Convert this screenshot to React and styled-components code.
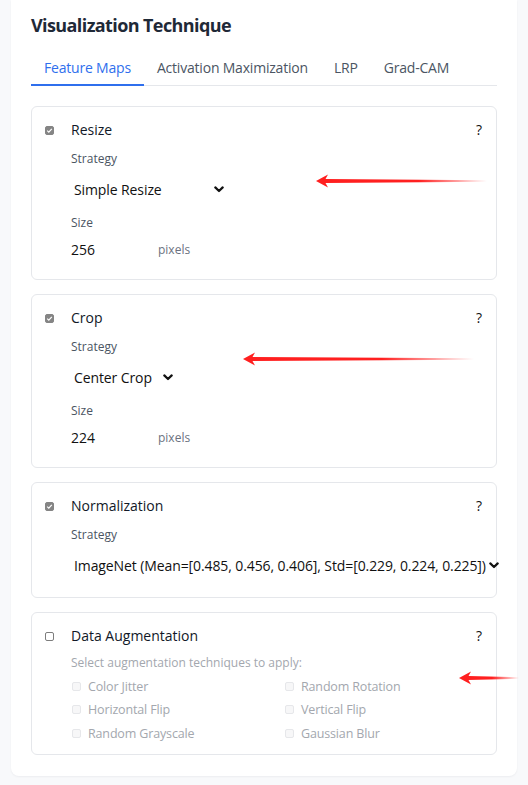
import React from "react";
import styled, { createGlobalStyle } from "styled-components";

const GlobalStyle = createGlobalStyle`
  html, body { margin: 0; padding: 0; background: #f8f9fb; }
  body { font-family: "Open Sans", "Noto Sans", sans-serif; color: #111827; }
  * { box-sizing: border-box; }
`;

const Page = styled.div`
  position: relative;
  padding: 0 11px 8px 11px;
  width: 528px;
`;

const Panel = styled.section`
  background: #ffffff;
  border-radius: 0 0 8px 8px;
  box-shadow: 0 1px 2px rgba(15, 23, 42, 0.05);
  padding: 12px 20px 21px 20px;
`;

const Title = styled.h2`
  margin: 0 0 12px 0;
  font-size: 18px;
  line-height: 26px;
  font-weight: 700;
  letter-spacing: -0.6px;
  color: #1f2937;
`;

const Tabs = styled.div`
  display: flex;
  border-bottom: 1px solid #e5e7eb;
  margin-bottom: 20px;
`;

const Tab = styled.div`
  padding: 8px 13px 6px 13px;
  font-size: 14px;
  line-height: 20px;
  letter-spacing: -0.2px;
  color: ${(p) => (p.$active ? "#2f6fed" : "#4b5563")};
  border-bottom: 2px solid ${(p) => (p.$active ? "#2f6fed" : "transparent")};
  margin-bottom: -1px;
`;

const Stack = styled.div`
  display: flex;
  flex-direction: column;
  gap: 14px;
`;

const Card = styled.div`
  border: 1px solid #e5e7eb;
  border-radius: 6px;
  padding: 12px 14px ${(p) => p.$pb ?? 17}px 13px;
  display: grid;
  grid-template-columns: 26px 1fr;
  background: #fff;
`;

const CheckCol = styled.div`
  height: 22px;
  display: flex;
  align-items: center;
`;

const Box = styled.span`
  display: inline-flex;
  align-items: center;
  justify-content: center;
  width: 9px;
  height: 9px;
  border-radius: 2px;
  background: ${(p) => (p.$checked ? "#858585" : p.$faint ? "#f7f7f8" : "#ffffff")};
  border: 1px solid ${(p) => (p.$checked ? "#858585" : p.$faint ? "#e6e7ea" : "#7d7d7d")};
  flex-shrink: 0;
`;

const Body = styled.div`
  display: flex;
  flex-direction: column;
  min-width: 0;
`;

const HeadRow = styled.div`
  display: flex;
  justify-content: space-between;
  align-items: center;
  height: 22px;
  margin-top: -1px;
  margin-bottom: 1px;
  font-size: 14px;
  color: #111827;
`;

const Help = styled.span`
  font-size: 14px;
  color: #111;
`;

const Label = styled.div`
  margin-top: ${(p) => p.$mt ?? 8}px;
  font-size: 12px;
  line-height: 20px;
  color: #4b5563;
`;

const Select = styled.div`
  margin-top: 5px;
  height: 30px;
  width: ${(p) => (p.$w ? `${p.$w}px` : "max-content")};
  display: flex;
  align-items: center;
  justify-content: space-between;
  padding: 0 4px 0 3px;
  font-size: 14px;
  letter-spacing: -0.1px;
  color: #111;
  white-space: nowrap;
  gap: 3px;
`;

const ValueRow = styled.div`
  margin-top: 3px;
  height: 26px;
  display: flex;
  align-items: center;
`;

const Value = styled.span`
  width: 87px;
  font-size: 14px;
  color: #111;
`;

const Unit = styled.span`
  font-size: 12px;
  color: #6b7280;
`;

const Desc = styled.div`
  margin-top: 7px;
  font-size: 12px;
  line-height: 18px;
  color: #a3a7ae;
`;

const OptGrid = styled.div`
  margin-top: 4px;
  display: grid;
  grid-template-columns: 213px 1fr;
  row-gap: 3.5px;
`;

const Opt = styled.div`
  display: flex;
  align-items: center;
  gap: 7px;
  height: 20px;
  font-size: 12.5px;
  letter-spacing: -0.15px;
  color: #a3a7ae;
  padding-left: 1px;
`;

const Arrow = styled.svg`
  position: absolute;
  overflow: visible;
  pointer-events: none;
`;

function Chevron() {
  return (
    <svg width="10" height="7" viewBox="0 0 10 7">
      <path d="M1.3 1.4 L5 5 L8.7 1.4" fill="none" stroke="#111" strokeWidth="2.2" strokeLinecap="round" strokeLinejoin="round" />
    </svg>
  );
}

function Check({ checked, faint }) {
  return (
    <Box $checked={checked} $faint={faint}>
      {checked && (
        <svg width="7" height="7" viewBox="0 0 7 7">
          <path d="M1.2 3.6 L2.8 5.1 L5.8 1.8" fill="none" stroke="#fff" strokeWidth="1.2" />
        </svg>
      )}
    </Box>
  );
}

function RedArrow({ x, y, len, solid, id }) {
  return (
    <Arrow style={{ left: x, top: y - 7 }} width={len} height="14" viewBox={`0 0 ${len} 14`}>
      <defs>
        <linearGradient id={id} x1="0" x2={len} y1="0" y2="0" gradientUnits="userSpaceOnUse">
          <stop offset="0" stopColor="#ff1f1f" />
          <stop offset={solid} stopColor="#ff2020" />
          <stop offset="1" stopColor="#ff2020" stopOpacity="0" />
        </linearGradient>
      </defs>
      <path
        d={`M0 7 L12 0.6 L9.5 5 L${len} 6.2 L${len} 7.8 L9.5 9 L12 13.4 Z`}
        fill={`url(#${id})`}
      />
    </Arrow>
  );
}

const tabs = ["Feature Maps", "Activation Maximization", "LRP", "Grad-CAM"];

function Strategy({ value, w }) {
  return (
    <>
      <Label>Strategy</Label>
      <Select $w={w}>
        <span>{value}</span>
        <Chevron />
      </Select>
    </>
  );
}

function SizeField({ value }) {
  return (
    <>
      <Label $mt={9}>Size</Label>
      <ValueRow>
        <Value>{value}</Value>
        <Unit>pixels</Unit>
      </ValueRow>
    </>
  );
}

export default function App() {
  return (
    <>
      <GlobalStyle />
      <Page>
        <Panel>
          <Title>Visualization Technique</Title>
          <Tabs>
            {tabs.map((t, i) => (
              <Tab key={t} $active={i === 0}>{t}</Tab>
            ))}
          </Tabs>
          <Stack>
            <Card>
              <CheckCol><Check checked /></CheckCol>
              <Body>
                <HeadRow><span>Resize</span><Help>?</Help></HeadRow>
                <Strategy value="Simple Resize" w={157} />
                <SizeField value="256" />
              </Body>
            </Card>
            <Card>
              <CheckCol><Check checked /></CheckCol>
              <Body>
                <HeadRow><span>Crop</span><Help>?</Help></HeadRow>
                <Strategy value="Center Crop" w={106} />
                <SizeField value="224" />
              </Body>
            </Card>
            <Card $pb={17}>
              <CheckCol><Check checked /></CheckCol>
              <Body>
                <HeadRow><span>Normalization</span><Help>?</Help></HeadRow>
                <Strategy value="ImageNet (Mean=[0.485, 0.456, 0.406], Std=[0.229, 0.224, 0.225])" />
              </Body>
            </Card>
            <Card $pb={11}>
              <CheckCol><Check /></CheckCol>
              <Body>
                <HeadRow><span>Data Augmentation</span><Help>?</Help></HeadRow>
                <Desc>Select augmentation techniques to apply:</Desc>
                <OptGrid>
                  {["Color Jitter", "Random Rotation", "Horizontal Flip", "Vertical Flip", "Random Grayscale", "Gaussian Blur"].map((o) => (
                    <Opt key={o}><Check faint />{o}</Opt>
                  ))}
                </OptGrid>
              </Body>
            </Card>
          </Stack>
        </Panel>
        <RedArrow id="a1" x={316} y={181} len={171} solid={0.6} />
        <RedArrow id="a2" x={243} y={359} len={231} solid={0.6} />
        <RedArrow id="a3" x={459} y={678} len={60} solid={0.55} />
      </Page>
    </>
  );
}
